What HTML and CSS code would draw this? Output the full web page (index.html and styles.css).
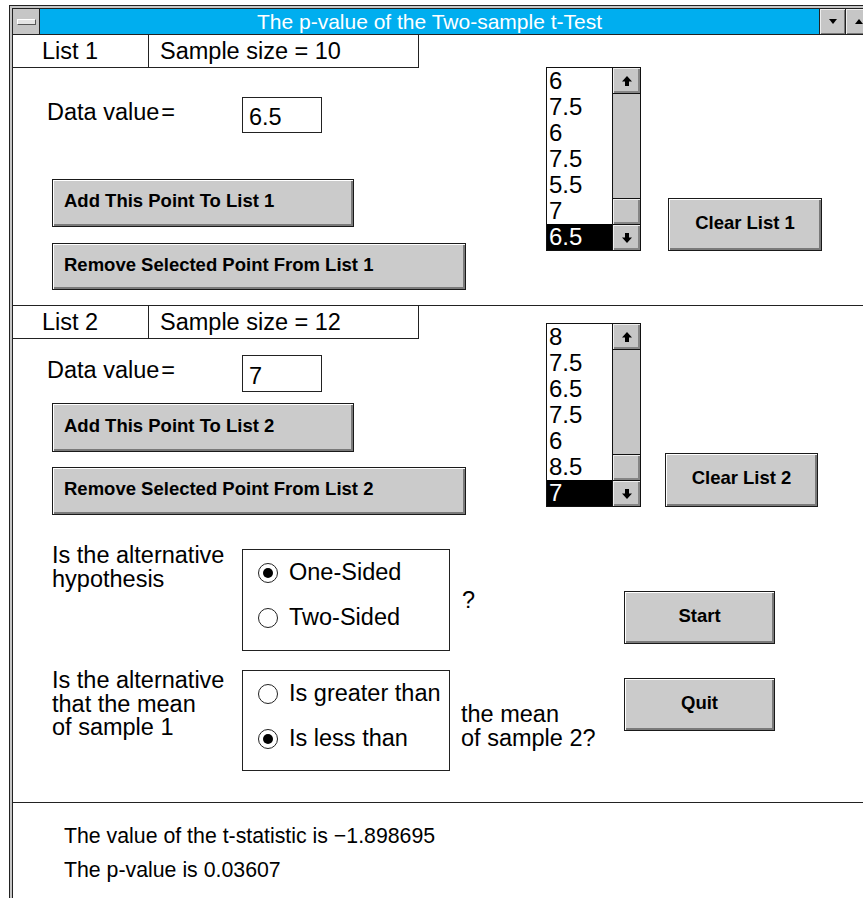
FILE: index.html
```html
<!DOCTYPE html>
<html lang="en">
<head>
	<meta charset="UTF-8">
	<title>The p-value of the Two-sample t-Test</title>
	<link rel="stylesheet" href="styles.css">
</head>
<body>
	<div id="window">
		<div id="inner">
			<div class="titlebar">
				<div class="sysmenu"><span class="sysbar"></span></div>
				<div class="title">The p-value of the Two-sample t-Test</div>
				<div class="tbtn"><svg width="8" height="5" viewBox="0 0 8 5"><path d="M0 0H8L4 5Z" fill="#000"/></svg></div>
				<div class="tbtn"><svg width="8" height="5" viewBox="0 0 8 5"><path d="M0 5H8L4 0Z" fill="#000"/></svg></div>
			</div>

			<!-- list 1 -->
			<div class="list_section sec1">
				<div class="left_col">
					<div class="list_head">
						<div class="head_name">List 1</div>
						<div class="head_size">Sample size = 10</div>
					</div>
					<div class="data_row">
						<span class="data_label">Data value&#8202;=</span>
						<div class="data_input">6.5</div>
					</div>
					<button class="btn btn_add">Add This Point To List 1</button>
					<button class="btn btn_remove">Remove Selected Point From List 1</button>
				</div>
				<div class="right_col">
					<div class="listbox">
						<ul class="items">
							<li>6</li>
							<li>7.5</li>
							<li>6</li>
							<li>7.5</li>
							<li>5.5</li>
							<li>7</li>
							<li class="selected">6.5</li>
						</ul>
						<div class="scrollbar">
							<div class="sb_btn sb_up"><svg width="10" height="10" viewBox="0 0 10 10"><path d="M5 0L10 5.5H7V10H3V5.5H0Z" fill="#000"/></svg></div>
							<div class="sb_track"></div>
							<div class="sb_thumb"></div>
							<div class="sb_btn"><svg width="10" height="10" viewBox="0 0 10 10"><path d="M5 10L10 4.5H7V0H3V4.5H0Z" fill="#000"/></svg></div>
						</div>
					</div>
					<button class="btn btn_clear">Clear List 1</button>
				</div>
			</div>

			<!-- list 2 -->
			<div class="sec2">
				<div class="list_section">
					<div class="left_col">
						<div class="list_head">
							<div class="head_name">List 2</div>
							<div class="head_size">Sample size = 12</div>
						</div>
						<div class="data_row">
							<span class="data_label">Data value&#8202;=</span>
							<div class="data_input">7</div>
						</div>
						<button class="btn btn_add">Add This Point To List 2</button>
						<button class="btn btn_remove">Remove Selected Point From List 2</button>
					</div>
					<div class="right_col">
						<div class="listbox">
							<ul class="items">
								<li>8</li>
								<li>7.5</li>
								<li>6.5</li>
								<li>7.5</li>
								<li>6</li>
								<li>8.5</li>
								<li class="selected">7</li>
							</ul>
							<div class="scrollbar">
								<div class="sb_btn sb_up"><svg width="10" height="10" viewBox="0 0 10 10"><path d="M5 0L10 5.5H7V10H3V5.5H0Z" fill="#000"/></svg></div>
								<div class="sb_track"></div>
								<div class="sb_thumb"></div>
								<div class="sb_btn"><svg width="10" height="10" viewBox="0 0 10 10"><path d="M5 10L10 4.5H7V0H3V4.5H0Z" fill="#000"/></svg></div>
							</div>
						</div>
						<button class="btn btn_clear">Clear List 2</button>
					</div>
				</div>

				<!-- hypothesis -->
				<div class="hyp">
					<div class="hyp_label row1">Is the alternative<br>hypothesis</div>
					<div class="choice_box">
						<div class="radio"><span class="dot on"></span>One-Sided</div>
						<div class="radio"><span class="dot"></span>Two-Sided</div>
					</div>
					<div class="hyp_after q">?</div>
					<button class="btn btn_start">Start</button>

					<div class="hyp_label row2">Is the alternative<br>that the mean<br>of sample 1</div>
					<div class="choice_box">
						<div class="radio"><span class="dot"></span>Is greater than</div>
						<div class="radio"><span class="dot on"></span>Is less than</div>
					</div>
					<div class="hyp_after mean2">the mean<br>of sample 2?</div>
					<button class="btn btn_quit">Quit</button>
				</div>
			</div>

			<!-- results -->
			<div class="results">
				<p>The value of the t-statistic is &minus;1.898695</p>
				<p>The p-value is 0.03607</p>
			</div>
		</div>
	</div>
</body>
</html>
```

FILE: styles.css
```css
*{
	margin:0;
	padding:0;
	box-sizing:border-box;
}
html,body{
	overflow:hidden;
	background:#fff;
}
body{
	font-family:"Liberation Sans", Arial, sans-serif;
	color:#000;
	height:898px;
}
#window{
	margin:5px 0 0 9px;
	width:866px;
	height:900px;
	border:1px solid #222;
	padding:2px;
	background:#c6c6c6;
}
#inner{
	width:860px;
	height:100%;
	border:1px solid #222;
	background:#fff;
}

/* title bar */
.titlebar{
	display:flex;
	height:26px;
	border-bottom:1px solid #222;
}
.sysmenu{
	width:27px;
	border-right:1px solid #222;
	background:#c6c6c6;
	display:flex;
	align-items:center;
	justify-content:center;
}
.sysbar{
	width:19px;
	height:6px;
	background:#e4e4e4;
	border:1px solid;
	border-color:#fff #555 #555 #fff;
}
.title{
	flex:1;
	background:#00aeef;
	color:#fff;
	font-size:21px;
	line-height:25px;
	text-align:center;
}
.tbtn{
	width:26px;
	border-left:1px solid #222;
	background:#c6c6c6;
	box-shadow:inset 1px 1px 0 #eee, inset -1px -1px 0 #777;
	display:flex;
	align-items:center;
	justify-content:center;
}

/* list sections */
.list_section{
	display:flex;
}
.sec2{
	border-top:1px solid #222;
}
.left_col{
	width:533px;
}
.sec1 .left_col{
	padding-bottom:15px;
}
.list_head{
	display:flex;
	width:406px;
	height:33px;
	border-right:1px solid #222;
	border-bottom:1px solid #222;
	font-size:23.5px;
	line-height:32px;
}
.head_name{
	width:136px;
	padding-left:29px;
	border-right:1px solid #222;
}
.head_size{
	padding-left:11px;
}
.data_row{
	display:flex;
	align-items:center;
	margin:29px 0 0 34px;
	height:36px;
	font-size:23.5px;
}
.sec2 .data_row{
	margin-top:16px;
	height:37px;
}
.data_label{
	width:195px;
	padding-bottom:6px;
}
.data_input{
	width:80px;
	height:100%;
	border:1px solid #222;
	padding:5px 0 0 6px;
	display:flex;
	align-items:center;
}

/* buttons */
.btn{
	display:flex;
	align-items:center;
	justify-content:center;
	font-family:"Liberation Sans", Arial, sans-serif;
	font-weight:bold;
	font-size:18.5px;
	color:#000;
	background:#cbcbcb;
	border:1px solid #1a1a1a;
	box-shadow:inset 1px 1px 0 #fff, inset -2px -2px 0 #7a7a7a;
	padding-bottom:4px;
}
.btn_add, .btn_remove{
	justify-content:flex-start;
	padding-left:11px;
	margin-left:39px;
}
.btn_add{
	width:302px;
	height:48px;
	margin-top:46px;
}
.btn_remove{
	width:414px;
	height:47px;
	margin-top:16px;
}
.sec2 .btn_add{
	margin-top:11px;
	height:49px;
}
.sec2 .btn_remove{
	margin-top:15px;
	height:48px;
}
.btn_clear{
	width:154px;
	height:53px;
	margin-left:27px;
}
.sec2 .btn_clear{
	width:153px;
	height:54px;
	margin-left:24px;
}

/* list box */
.right_col{
	display:flex;
	align-items:flex-end;
	align-self:flex-start;
}
.listbox{
	display:flex;
	width:95px;
	height:184px;
	margin-top:32px;
	border:1px solid #111;
}
.sec2 .listbox{
	margin-top:17px;
}
.items{
	list-style:none;
	flex:1;
	font-size:24px;
	line-height:26px;
}
.items li{
	height:26px;
	padding-left:2px;
}
.items li.selected{
	background:#000;
	color:#fff;
}
.scrollbar{
	width:28px;
	border-left:1px solid #111;
	background:#c6c6c6;
	display:flex;
	flex-direction:column;
}
.sb_btn{
	height:25px;
	display:flex;
	align-items:center;
	justify-content:center;
	box-shadow:inset 1px 1px 0 #eee, inset -2px -2px 0 #858585;
}
.sb_up{
	height:26px;
	border-bottom:1px solid #111;
}
.sb_track{
	flex:1;
}
.sb_thumb{
	height:27px;
	border-top:1px solid #111;
	border-bottom:1px solid #111;
	box-shadow:inset 1px 1px 0 #eee, inset -2px -2px 0 #858585;
}

/* hypothesis */
.hyp{
	display:grid;
	grid-template-columns:190px 208px 174px 151px;
	grid-template-rows:102px 101px;
	row-gap:19px;
	align-items:start;
	margin:34px 0 31px 39px;
	font-size:23.5px;
}
.hyp_label{
	line-height:23.5px;
}
.hyp_label.row1{
	margin-top:-5px;
}
.hyp_label.row2{
	margin-top:-1px;
}
.choice_box{
	height:100%;
	border:1px solid #222;
}
.radio{
	display:flex;
	align-items:center;
	height:45px;
	padding-left:15px;
}
.dot{
	width:20px;
	height:20px;
	margin-right:11px;
	border:1.5px solid #222;
	border-radius:50%;
	display:flex;
	align-items:center;
	justify-content:center;
}
.dot.on::after{
	content:"";
	width:10px;
	height:10px;
	border-radius:50%;
	background:#000;
}
.hyp_after{
	line-height:24px;
}
.q{
	margin:39px 0 0 12px;
}
.mean2{
	margin:32px 0 0 11px;
}
.btn_start{
	height:53px;
	margin-top:42px;
}
.btn_quit{
	height:53px;
	margin-top:8px;
}

/* results */
.results{
	border-top:1px solid #222;
	padding:16px 0 0 51px;
	font-size:21.3px;
	line-height:34px;
}
```
